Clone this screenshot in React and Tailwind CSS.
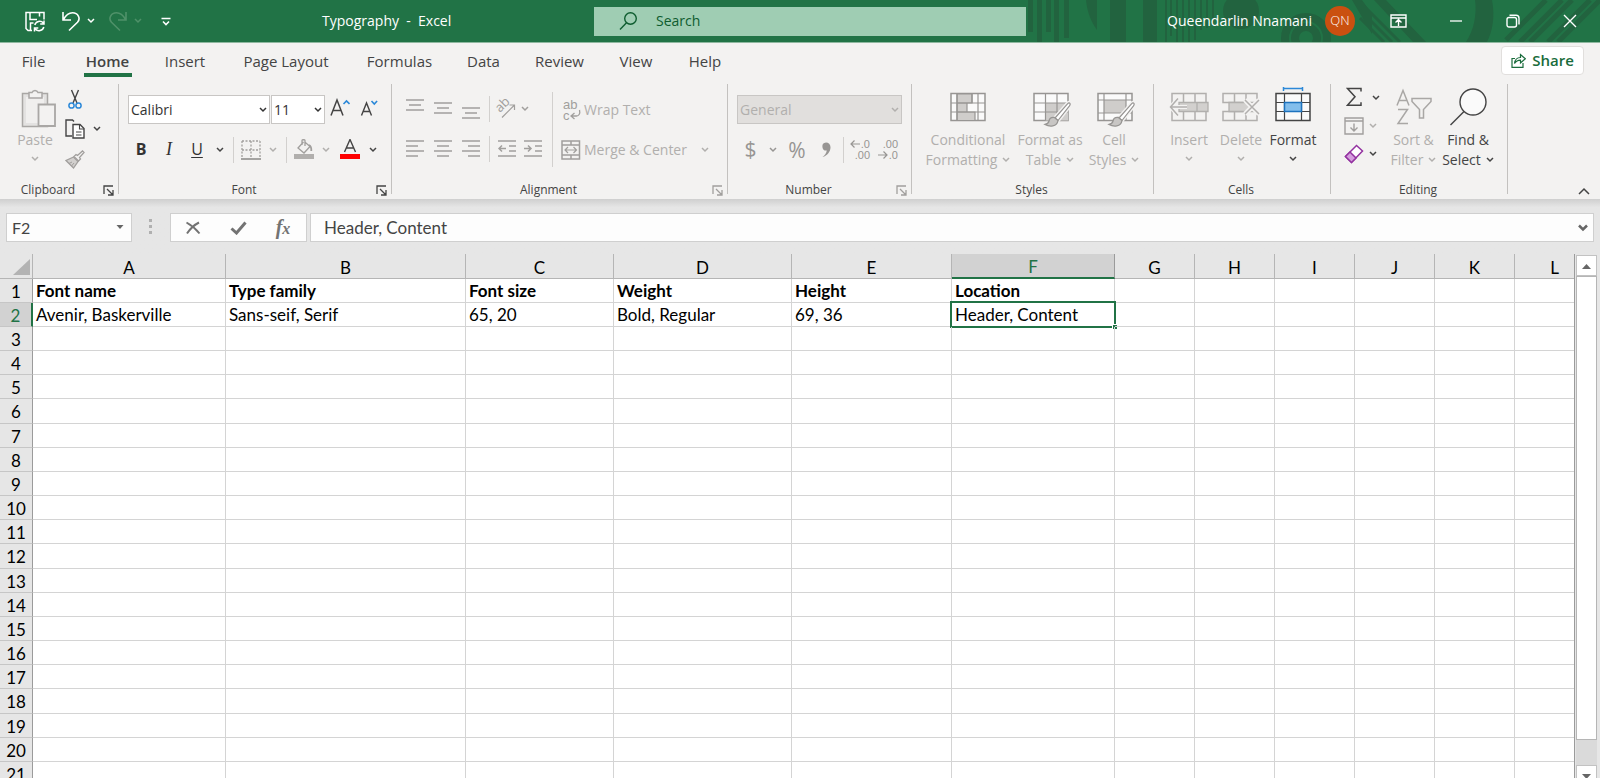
import { useState } from 'react';

const TABS = [
  { name: 'File', width: 'w-[67px]' },
  { name: 'Home', width: 'w-[81px]' },
  { name: 'Insert', width: 'w-[74px]' },
  { name: 'Page Layout', width: 'w-[128px]' },
  { name: 'Formulas', width: 'w-[99px]' },
  { name: 'Data', width: 'w-[69px]' },
  { name: 'Review', width: 'w-[83px]' },
  { name: 'View', width: 'w-[70px]' },
  { name: 'Help', width: 'w-[68px]' },
];

const COLUMNS = [
  { name: 'A', width: 'w-[193px]' },
  { name: 'B', width: 'w-[240px]' },
  { name: 'C', width: 'w-[148px]' },
  { name: 'D', width: 'w-[178px]' },
  { name: 'E', width: 'w-[160px]' },
  { name: 'F', width: 'w-[163px]' },
  { name: 'G', width: 'w-[80px]' },
  { name: 'H', width: 'w-[80px]' },
  { name: 'I', width: 'w-[80px]' },
  { name: 'J', width: 'w-[80px]' },
  { name: 'K', width: 'w-[80px]' },
  { name: 'L', width: 'w-[80px]' },
];

const CELLS = {
  A1: 'Font name',
  B1: 'Type family',
  C1: 'Font size',
  D1: 'Weight',
  E1: 'Height',
  F1: 'Location',
  A2: 'Avenir, Baskerville',
  B2: 'Sans-seif, Serif',
  C2: '65, 20',
  D2: 'Bold, Regular',
  E2: '69, 36',
  F2: 'Header, Content',
};

const ROWS = Array.from({ length: 21 }, (_, i) => i + 1);

function Svg({ w, h, className = '', children }) {
  return (
    <svg
      width={w}
      height={h}
      viewBox={`0 0 ${w} ${h}`}
      fill="none"
      stroke="currentColor"
      className={`shrink-0 ${className}`}
      aria-hidden="true"
    >
      {children}
    </svg>
  );
}

function Chevron({ className = '' }) {
  return (
    <Svg w={8} h={6} className={className}>
      <path d="M1 1l3 3 3-3" strokeWidth="1.5" />
    </Svg>
  );
}

function ChevronButton({ label, width = 'w-[18px]', className = 'text-[#444]' }) {
  return (
    <button aria-label={label} className={`flex h-[26px] shrink-0 items-center justify-center ${width} ${className}`}>
      <Chevron />
    </button>
  );
}

function IconButton({ label, width = 'w-7', className = 'text-[#444]', children }) {
  return (
    <button aria-label={label} className={`flex h-[26px] shrink-0 items-center justify-center ${width} ${className}`}>
      {children}
    </button>
  );
}

function Divider({ className = 'mx-1 h-[26px]' }) {
  return <span className={`w-px shrink-0 bg-[#d2d0ce] ${className}`} />;
}

/* ---------- title bar ---------- */

function TitlePattern() {
  return (
    <svg
      width="580"
      height="42"
      viewBox="1020 0 580 42"
      fill="#22633f"
      className="pointer-events-none absolute top-0 right-0"
      aria-hidden="true"
    >
      <path d="M1028 0h5v32h-5zM1037 0h5v42h-5zM1046 0h5v32h-5zM1054 0h5v42h-5zM1064 0h5v38h-5z" />
      <path d="M1086 0h11v30c-6-8-10-19-11-30z" />
      <path d="M1110 0h16v42h-16zM1143 0h14v42h-14z" />
      <path d="M1165 0h2v42h-2zM1170 0h2v36h-2zM1176 0h2v42h-2zM1182 0h2v42h-2zM1188 0h2v42h-2zM1194 0h2v40h-2zM1200 0h2v30h-2zM1206 0h2v28h-2zM1212 0h2v26h-2z" />
      <circle cx="1241" cy="11" r="18" />
      <circle cx="1306" cy="38" r="21" fill="none" stroke="#22633f" strokeWidth="8" />
      <circle cx="1306" cy="38" r="11" fill="none" stroke="#22633f" strokeWidth="8" />
      <path d="M1352 0h10l10 14v20zM1374 0h12l40 42h-13z" />
      <path d="M1360 10l32 32M1360 18l24 24M1360 2l40 40" stroke="#22633f" strokeWidth="3" />
      <path d="M1475 0h17c3 16 1 30-5 42h-21c8-12 11-28 9-42z" />
      <path d="M1506 40l40-40M1520 42l42-42M1530 42l42-42M1548 42l42-42M1558 42l42-42" stroke="#22633f" strokeWidth="5" />
    </svg>
  );
}

function TitleBar() {
  return (
    <header className="relative flex h-[43px] shrink-0 items-center border-b border-[#8fb8a0] bg-[#217346] text-white">
      <TitlePattern />
      <div className="relative flex w-[594px] shrink-0 items-center pl-[25px]">
        <button aria-label="Save">
          <Svg w={20} h={21}>
            <path d="M7 19.500H3L1 17.500V1.500h18v7M5 1.500v7h7M14.500 1.500v4M5.500 19v-7h3" strokeWidth="1.500" />
            <path d="M9.800 14a5 5 0 0 1 8.600-2M19 9.500v3.500h-3.800M18.800 16a5 5 0 0 1-8.600 2M9.500 20.500V17h3.800" strokeWidth="1.500" />
          </Svg>
        </button>
        <button aria-label="Undo" className="ml-4">
          <Svg w={20} h={22}>
            <path d="M2 2v8h8M2.500 9.500C5 5 8 2.800 11.500 2.800c5.500 0 8.500 5.500 5 9.500L8 20.500" strokeWidth="1.600" />
          </Svg>
        </button>
        <button aria-label="Undo history" className="ml-[6px]">
          <Chevron />
        </button>
        <button aria-label="Redo" className="ml-[13px] text-[#4f9169]">
          <Svg w={20} h={22}>
            <path d="M18 2v8h-8M17.500 9.500C15 5 12 2.800 8.500 2.800c-5.500 0-8.500 5.500-5 9.500l8.500 8.200" strokeWidth="1.600" />
          </Svg>
        </button>
        <button aria-label="Redo history" className="ml-[6px] text-[#4f9169]">
          <Chevron />
        </button>
        <button aria-label="Customize Quick Access Toolbar" className="ml-[19px]">
          <Svg w={10} h={9}>
            <path d="M0.500 1.500h9M2 4.500l3 3 3-3" strokeWidth="1.600" />
          </Svg>
        </button>
        <h1 className="ml-[151px] text-sm whitespace-pre">Typography  -  Excel</h1>
      </div>
      <label className="relative flex h-[29px] min-w-0 flex-1 items-center bg-[#9fcdb3] pl-[25px] text-[#0e5c2f]">
        <Svg w={19} h={20}>
          <circle cx="11.500" cy="7.500" r="5.800" strokeWidth="1.400" />
          <path d="M7.500 11.800L1 18.500" strokeWidth="1.400" />
        </Svg>
        <input
          type="search"
          aria-label="Search"
          placeholder="Search"
          className="ml-[18px] min-w-0 flex-1 bg-transparent text-sm outline-none placeholder:text-[#0e5c2f]"
        />
      </label>
      <div className="relative flex w-[574px] shrink-0 items-center justify-end pr-[2px]">
        <span className="mr-[13px] text-sm">Queendarlin Nnamani</span>
        <button className="mr-[15px] flex size-[30px] items-center justify-center rounded-full bg-[#ca5010] text-[13px] font-light">
          QN
        </button>
        <button aria-label="Ribbon Display Options" className="flex w-[57px] justify-center">
          <Svg w={17} h={14}>
            <path d="M1 1h15v12H1zM1 4h15M8.500 12V6M5.500 8.500l3-3 3 3" strokeWidth="1.400" />
          </Svg>
        </button>
        <button aria-label="Minimize" className="flex w-[57px] justify-center">
          <Svg w={14} h={14}>
            <path d="M1 7h12" strokeWidth="1.300" />
          </Svg>
        </button>
        <button aria-label="Restore Down" className="flex w-[57px] justify-center">
          <Svg w={14} h={14}>
            <rect x="1" y="3.500" width="9.500" height="9.500" rx="2" strokeWidth="1.400" />
            <path d="M3.500 1.200H10a3 3 0 0 1 3 3V10.500" strokeWidth="1.400" />
          </Svg>
        </button>
        <button aria-label="Close" className="flex w-[57px] justify-center">
          <Svg w={14} h={14}>
            <path d="M1 1l12 12M13 1L1 13" strokeWidth="1.400" />
          </Svg>
        </button>
      </div>
    </header>
  );
}

function TabStrip({ active, onSelect }) {
  return (
    <nav className="flex h-[37px] shrink-0 items-start pr-4 text-[15px] text-[#444]">
      {TABS.map((tab) => (
        <button
          key={tab.name}
          onClick={() => onSelect(tab.name)}
          className={`flex h-[34px] shrink-0 flex-col items-center ${tab.width}`}
        >
          <span className={`h-[30px] leading-9 ${active === tab.name ? 'font-semibold' : ''}`}>{tab.name}</span>
          {active === tab.name && <span className="h-1 w-12 bg-[#217346]" />}
        </button>
      ))}
      <button className="mt-[3px] ml-auto flex h-[29px] w-[83px] items-center justify-center gap-[6px] rounded-sm border border-[#e1dfdd] bg-white font-semibold text-[#1a6c3c]">
        <Svg w={15} h={15}>
          <path d="M4 5.500H1v8.800h11V10M3.500 10.500c.5-4 3-6 6-6V1.500l4.800 4.300L9.500 10V7.200c-2.500 0-4.500 1-6 3.300z" strokeWidth="1.200" />
        </Svg>
        Share
      </button>
    </nav>
  );
}

/* ---------- ribbon ---------- */

function Group({ title, width, launcher, children }) {
  return (
    <section className={`flex h-[115px] shrink-0 ${width}`}>
      <div className="flex min-w-0 flex-1 flex-col">
        <div className="flex h-[98px]">{children}</div>
        <footer className="flex h-4 items-center">
          <h2 className="flex-1 pr-[2px] text-center text-xs leading-4 text-[#444]">{title}</h2>
          {launcher && (
            <button aria-label={`${title} settings`} className={`flex w-5 justify-center ${launcher}`}>
              <Svg w={11} h={11}>
                <path d="M1 9V1h9M4 4l5.500 5.500M10 5v5H5" strokeWidth="1.300" />
              </Svg>
            </button>
          )}
        </footer>
      </div>
      <span className="h-[110px] w-px bg-[#c3c1bf]" />
    </section>
  );
}

function BigButton({ lines, width, icon, disabled, below }) {
  return (
    <button
      className={`flex shrink-0 flex-col items-center pt-[3px] text-sm leading-5 ${width} ${disabled ? 'text-[#b1afad]' : 'text-[#444]'}`}
    >
      <span className="mb-px h-[42px]">{icon}</span>
      <span>{lines[0]}</span>
      {lines[1] && (
        <span className="flex items-center gap-[5px] whitespace-nowrap">
          {lines[1]}
          <Chevron />
        </span>
      )}
      {below && <Chevron className="mt-[6px]" />}
    </button>
  );
}

function PasteIcon() {
  return (
    <Svg w={42} h={42} className="text-[#a9a7a5]">
      <path d="M8.500 6.500h25v33h-25z" fill="#e3e2e1" strokeWidth="1.500" />
      <path d="M12 10h18v26H12z" fill="#f0efee" stroke="none" />
      <path d="M15 5.500h3a3.200 3.200 0 0 1 6 0h4V11H15z" fill="#f3f2f1" strokeWidth="1.500" />
      <path d="M24.500 17.500h16.500v21.500h-16.500z" fill="#f3f2f1" strokeWidth="1.800" />
    </Svg>
  );
}

function ClipboardGroup() {
  return (
    <Group title="Clipboard" width="w-[119px]" launcher="text-[#444]">
      <div className="flex pl-3">
        <BigButton lines={['Paste']} width="w-[46px]" icon={<PasteIcon />} disabled below />
        <div className="flex flex-col pl-[5px]">
          <button aria-label="Cut" className="flex h-[30px] w-6 items-center justify-center text-[#444]">
            <Svg w={14} h={20}>
              <path d="M3.500 1l5.500 13M10.500 1L5 14" strokeWidth="1.400" />
              <circle cx="3.500" cy="16.500" r="2.600" stroke="#2b88d8" strokeWidth="1.500" />
              <circle cx="10.500" cy="16.500" r="2.600" stroke="#2b88d8" strokeWidth="1.500" />
            </Svg>
          </button>
          <div className="flex h-[30px] items-center">
            <IconButton label="Copy" width="w-6">
              <Svg w={20} h={20}>
                <path d="M7 17H1V1h6.500l1.500 1.500" strokeWidth="1.400" />
                <path d="M8 5.500h7l4 4V19H8z" fill="#fff" strokeWidth="1.400" />
                <path d="M14.500 5.500V10H19M11 13h5.500M11 16h5.500" strokeWidth="1.100" />
              </Svg>
            </IconButton>
            <ChevronButton label="Copy options" width="w-5" />
          </div>
          <button aria-label="Format Painter" className="flex h-[30px] w-6 items-center justify-center text-[#a19f9d]">
            <Svg w={20} h={19}>
              <path d="M19 2.500L17.500 1l-5 4.500-1.500-1-2 2 4.500 4.500 2-2-1-1.500z" strokeWidth="1.300" />
              <path d="M8.500 7L1 10.500l7.500 7.500 4.500-6.500z" fill="#d2d0ce" strokeWidth="1.300" />
              <path d="M4 13.500l3-1.500M6.500 16l2.500-3" strokeWidth="1" />
            </Svg>
          </button>
        </div>
      </div>
    </Group>
  );
}

function Combo({ label, value, width, disabled }) {
  return (
    <div className={`relative h-[29px] shrink-0 ${width}`}>
      <select
        aria-label={label}
        disabled={disabled}
        className={`h-full w-full appearance-none border border-[#c8c6c4] px-[2px] text-sm opacity-100 ${
          disabled ? 'bg-[#e1dfdd] text-[#b1afad]' : 'bg-white text-[#333]'
        }`}
      >
        <option>{value}</option>
      </select>
      <Chevron
        className={`pointer-events-none absolute top-3 right-[3px] ${disabled ? 'text-[#b1afad]' : 'text-[#333]'}`}
      />
    </div>
  );
}

function FontGroup() {
  return (
    <Group title="Font" width="w-[273px]" launcher="text-[#444]">
      <div className="flex flex-col pt-[11px] pl-2">
        <div className="flex h-[29px] items-center pl-px">
          <Combo label="Font" value="Calibri" width="w-[142px]" />
          <Combo label="Font size" value="11" width="ml-px w-[54px]" />
          <IconButton label="Increase Font Size" width="w-[30px]">
            <Svg w={20} h={24}>
              <path d="M1 17.500L7 2l6 15.500M3 12.500h8" strokeWidth="1.500" />
              <path d="M13.500 6l3-3 3 3" stroke="#2b88d8" strokeWidth="1.600" />
            </Svg>
          </IconButton>
          <IconButton label="Decrease Font Size" width="w-[27px]">
            <Svg w={18} h={24}>
              <path d="M1.500 17.500L6.500 5l5 12.500M3 13.500h7" strokeWidth="1.400" />
              <path d="M11.500 3l2.800 3 2.800-3" stroke="#2b88d8" strokeWidth="1.600" />
            </Svg>
          </IconButton>
        </div>
        <div className="mt-[13px] flex h-[26px] items-center">
          <button className="w-7 pb-[3px] text-center text-base leading-5 font-bold text-[#333]" aria-label="Bold">
            B
          </button>
          <button
            className="w-7 pb-[3px] text-center font-['Liberation_Serif',serif] text-lg leading-5 text-[#333] italic"
            aria-label="Italic"
          >
            I
          </button>
          <button
            className="w-7 pb-[3px] text-center text-base leading-5 text-[#333] underline underline-offset-2"
            aria-label="Underline"
          >
            U
          </button>
          <ChevronButton label="Underline options" />
          <Divider />
          <IconButton label="Borders" width="w-[26px]" className="text-[#a19f9d]">
            <Svg w={20} h={20}>
              <path d="M1 1h18M1 1v16M19 1v16M10 1v16M1 10h18" strokeWidth="1.300" strokeDasharray="2 1.500" />
              <path d="M0 19h20" stroke="#8a8886" strokeWidth="1.500" />
            </Svg>
          </IconButton>
          <ChevronButton label="Border options" className="text-[#b1afad]" />
          <Divider />
          <IconButton label="Fill Color" width="w-[26px]" className="text-[#a19f9d]">
            <Svg w={20} h={22}>
              <path d="M9.500 3L4 9l6 5 6-6.500-5.500-4.800M8 6V1.500c0-1 3-1 3 0V7" strokeWidth="1.300" />
              <path d="M15 6c2 1 2.500 3 2.300 6" strokeWidth="1.800" />
              <path d="M0 15h20v5H0z" fill="#b1afad" stroke="none" />
            </Svg>
          </IconButton>
          <ChevronButton label="Fill color options" className="text-[#b1afad]" />
          <IconButton label="Font Color" width="w-[29px]">
            <Svg w={20} h={22}>
              <path d="M4.500 13L10 0.500 15.500 13M6.500 9h7" strokeWidth="1.400" />
              <path d="M0 15h20v5H0z" fill="#f00" stroke="none" />
            </Svg>
          </IconButton>
          <ChevronButton label="Font color options" />
        </div>
      </div>
    </Group>
  );
}

function Lines({ d }) {
  return (
    <Svg w={18} h={20}>
      <path d={d} strokeWidth="1.500" />
    </Svg>
  );
}

function AlignmentGroup() {
  const muted = 'text-[#a19f9d]';
  return (
    <Group title="Alignment" width="w-[336px]" launcher="text-[#a19f9d]">
      <div className="flex flex-col pt-[10px] pl-[9px]">
        <div className="flex h-[29px] items-center">
          <IconButton label="Top Align" className={muted}>
            <Lines d="M0 1h18M3 6h12M0 11h18" />
          </IconButton>
          <IconButton label="Middle Align" className={muted}>
            <Lines d="M0 4h18M3 9h12M0 14h18" />
          </IconButton>
          <IconButton label="Bottom Align" className={muted}>
            <Lines d="M0 9h18M3 14h12M0 19h18" />
          </IconButton>
          <Divider />
          <IconButton label="Orientation" width="w-[22px]" className={muted}>
            <svg
              width="22"
              height="22"
              viewBox="0 0 22 22"
              fill="none"
              stroke="currentColor"
              className="overflow-visible"
              aria-hidden="true"
            >
              <text transform="translate(6 15) rotate(-45)" fontSize="13" fill="currentColor" stroke="none">
                ab
              </text>
              <path d="M8 19.500L20 7.500M15.500 7h5v5" strokeWidth="1.200" />
            </svg>
          </IconButton>
          <ChevronButton label="Orientation options" className={muted} />
        </div>
        <div className="mt-[13px] flex h-[26px] items-center">
          <IconButton label="Align Left" className={muted}>
            <Lines d="M0 2h18M0 7h12M0 12h18M0 17h12" />
          </IconButton>
          <IconButton label="Center" className={muted}>
            <Lines d="M0 2h18M3 7h12M0 12h18M3 17h12" />
          </IconButton>
          <IconButton label="Align Right" className={muted}>
            <Lines d="M0 2h18M6 7h12M0 12h18M6 17h12" />
          </IconButton>
          <Divider />
          <IconButton label="Decrease Indent" width="w-[25px]" className={muted}>
            <Lines d="M0 2h18M11 7h7M11 12h7M0 17h18M1 9.500h7M4 6.500l-3 3 3 3" />
          </IconButton>
          <IconButton label="Increase Indent" className={muted}>
            <Lines d="M0 2h18M11 7h7M11 12h7M0 17h18M0 9.500h7M4 6.500l3 3-3 3" />
          </IconButton>
        </div>
      </div>
      <Divider className="mt-2 ml-[5px] h-[75px]" />
      <div className="flex flex-col pt-[11px] pl-2 text-sm text-[#b1afad]">
        <button className="flex h-[29px] items-center">
          <svg
            width="22"
            height="24"
            viewBox="0 0 22 24"
            fill="none"
            stroke="#a19f9d"
            className="overflow-visible font-['Liberation_Sans',sans-serif]"
            aria-hidden="true"
          >
            <text x="2" y="11" fontSize="13" fill="#a19f9d" stroke="none">
              ab
            </text>
            <text x="2" y="22" fontSize="13" fill="#a19f9d" stroke="none">
              c
            </text>
            <path d="M18.500 12c1 4-1 6-3 6h-5M13.500 15l-3.500 3 3.500 3" strokeWidth="1.300" />
          </svg>
          <span className="ml-px">Wrap Text</span>
        </button>
        <div className="mt-[13px] flex h-[26px] items-center">
          <button className="flex items-center">
            <Svg w={20} h={20} className="text-[#a19f9d]">
              <path d="M1 1h17.500v18H1zM1 5h17.500M1 15h17.500M10 1v4M10 15v4" strokeWidth="1.500" />
              <path d="M4 10h11.500M7 7l-3 3 3 3M12.500 7l3 3-3 3" strokeWidth="1.200" />
            </Svg>
            <span className="ml-[3px]">Merge &amp; Center</span>
          </button>
          <ChevronButton label="Merge options" width="ml-[9px] w-[18px]" className="text-[#b1afad]" />
        </div>
      </div>
    </Group>
  );
}

function DecimalIcon({ top, bottom, arrow }) {
  return (
    <svg
      width="20"
      height="24"
      viewBox="0 0 20 24"
      fill="none"
      stroke="currentColor"
      className="overflow-visible font-['Liberation_Sans',sans-serif]"
      aria-hidden="true"
    >
      <text x="20" y="10" fontSize="11" textAnchor="end" fill="currentColor" stroke="none">
        {top}
      </text>
      <text x="20" y="21" fontSize="11" textAnchor="end" fill="currentColor" stroke="none">
        {bottom}
      </text>
      <path d={arrow} strokeWidth="1.200" />
    </svg>
  );
}

function NumberGroup() {
  const muted = 'text-[#979593]';
  return (
    <Group title="Number" width="w-[184px]" launcher="text-[#a19f9d]">
      <div className="flex flex-col pt-[11px] pl-[9px]">
        <Combo label="Number Format" value="General" width="w-[165px]" disabled />
        <div className="mt-[13px] flex h-[26px] items-center">
          <button aria-label="Accounting Number Format" className={`w-[27px] pb-[2px] text-center text-[21px] leading-6 ${muted}`}>
            $
          </button>
          <ChevronButton label="Accounting options" className={muted} />
          <button aria-label="Percent Style" className={`w-[30px] pb-px text-center text-[21px] leading-6 ${muted}`}>
            %
          </button>
          <IconButton label="Comma Style" className={muted}>
            <Svg w={10} h={16}>
              <path d="M5 .5a4 4 0 1 0 .8 8c-.5 3-2 5-4.300 6.500 5-1.500 8-5.500 8-9.800C9.500 2.300 7.500.5 5 .5z" fill="currentColor" stroke="none" />
            </Svg>
          </IconButton>
          <Divider className="mx-[3px] h-[26px]" />
          <IconButton label="Increase Decimal" width="w-[26px]" className={muted}>
            <DecimalIcon top=".0" bottom=".00" arrow="M1 6h9M4.500 2.500L1 6l3.500 3.500" />
          </IconButton>
          <IconButton label="Decrease Decimal" width="w-[30px]" className={muted}>
            <DecimalIcon top=".00" bottom=".0" arrow="M0 17h9M5.500 13.500L9 17l-3.500 3.500" />
          </IconButton>
        </div>
      </div>
    </Group>
  );
}

function Brush() {
  return (
    <>
      <path
        d="M36.500 16c1 .8.7 2-.2 3.200L25 33.500l-3-2.500L34.500 16.800c.8-.9 1.500-1.200 2-.8z"
        fill="#fff"
        stroke="#f3f2f1"
        strokeWidth="4"
      />
      <path d="M36.500 16c1 .8.7 2-.2 3.200L25 33.500l-3-2.500L34.500 16.800c.8-.9 1.500-1.200 2-.8z" fill="#fff" strokeWidth="1.200" />
      <path d="M21.500 30.500c-3-.5-5 1-5.500 3.500-.5 2-2 3-4 3.500 4.500 2.500 12 2.500 13-4z" fill="#c8c6c4" strokeWidth="1.300" />
    </>
  );
}

function StylesGroup() {
  return (
    <Group title="Styles" width="w-[242px]">
      <div className="flex pl-[11px]">
        <BigButton
          lines={['Conditional', 'Formatting']}
          width="w-[90px]"
          disabled
          icon={
            <Svg w={36} h={42} className="text-[#979593]">
              <path d="M1 6.500h34v27H1z" fill="#fafafa" strokeWidth="1.500" />
              <path d="M7 7h15v9H7zM7 16h10v9H7zM7 25h18v8.500H7z" fill="#cfcdcb" strokeWidth="1.200" />
              <path d="M1 16h34M1 25h34M7 6.500v27M28 6.500v27M22 6.500v9.500" strokeWidth="1.200" />
            </Svg>
          }
        />
        <BigButton
          lines={['Format as', 'Table']}
          width="w-[74px]"
          disabled
          icon={
            <Svg w={38} h={42} className="ml-1 text-[#979593]">
              <path d="M1 6.500h34v27H1z" fill="#fafafa" strokeWidth="1.500" />
              <path d="M12.500 16H35v17.500H12.500z" fill="#cfcdcb" stroke="none" />
              <path d="M1 16h34M1 25h34M12.500 6.500v27M24 6.500v27" strokeWidth="1.200" />
              <Brush />
            </Svg>
          }
        />
        <BigButton
          lines={['Cell', 'Styles']}
          width="w-[54px]"
          disabled
          icon={
            <Svg w={38} h={42} className="ml-1 text-[#979593]">
              <path d="M1 6.500h34v27H1z" fill="#fafafa" strokeWidth="1.500" />
              <path d="M7 13h22v13H7z" fill="#cfcdcb" stroke="none" />
              <path d="M1 13h34M1 26h34M7 6.500v27M29 6.500v27" strokeWidth="1.200" />
              <Brush />
            </Svg>
          }
        />
      </div>
    </Group>
  );
}

function CellsGroup() {
  return (
    <Group title="Cells" width="w-[177px]">
      <div className="flex pl-[9px]">
        <BigButton
          lines={['Insert']}
          width="w-[52px]"
          disabled
          below
          icon={
            <Svg w={40} h={42} className="text-[#b1afad]">
              <path d="M3 6.500h34v27H3zM14.500 6.500v27M26 6.500v27" strokeWidth="1.500" />
              <path d="M10 15.500h29v9H10z" fill="#d2d0ce" strokeWidth="1.300" />
              <path d="M28 15.500v9" strokeWidth="1.300" />
              <path d="M18 20H2M9 11.500L1.500 20 9 28.500" stroke="#f3f2f1" strokeWidth="4" />
              <path d="M18 20H2M9 11.500L1.500 20 9 28.500" strokeWidth="1.500" />
            </Svg>
          }
        />
        <BigButton
          lines={['Delete']}
          width="w-[52px]"
          disabled
          below
          icon={
            <Svg w={38} h={42} className="text-[#b1afad]">
              <path d="M1 6.500h34v9H1zM1 24.500h34v9H1zM12.500 6.500v27M24 6.500v27" strokeWidth="1.500" />
              <path d="M7 15.500h17l5 4.500-5 4.500H7z" fill="#d2d0ce" strokeWidth="1.300" />
              <path d="M23 13l14 14M37 13L23 27" stroke="#f3f2f1" strokeWidth="5" />
              <path d="M23 13l14 14M37 13L23 27" strokeWidth="1.500" />
            </Svg>
          }
        />
        <BigButton
          lines={['Format']}
          width="w-[52px]"
          below
          icon={
            <Svg w={36} h={42}>
              <path d="M1 6.500h34v27H1z" fill="#fafafa" strokeWidth="1.500" />
              <path d="M1 15.500h34M1 24.500h34M9.500 6.500v27M26.500 6.500v27" strokeWidth="1.200" />
              <path d="M9.500 15.500h17v9h-17z" fill="#83beec" stroke="#1e73be" strokeWidth="1.500" />
              <path d="M8.500 1.500h19M8.500 0v4M27.500 0v4" stroke="#2b88d8" strokeWidth="1.500" />
            </Svg>
          }
        />
      </div>
    </Group>
  );
}

function EditingGroup() {
  return (
    <Group title="Editing" width="w-[177px]">
      <div className="flex pl-[10px]">
        <div className="flex w-[47px] flex-col">
          <div className="flex h-7 items-center">
            <IconButton label="AutoSum" width="w-[26px]">
              <Svg w={16} h={22}>
                <path d="M15 4.500V1.500H1.500L9 9.800 1.500 18.200H15v-3" strokeWidth="1.500" />
              </Svg>
            </IconButton>
            <ChevronButton label="AutoSum options" />
          </div>
          <div className="flex h-7 items-center">
            <IconButton label="Fill" width="w-[26px]" className="text-[#a19f9d]">
              <Svg w={20} h={18}>
                <path d="M1 1h18v16H1zM1 4h18M10 6.500V14M6.500 10.500L10 14l3.500-3.500" strokeWidth="1.400" />
              </Svg>
            </IconButton>
            <ChevronButton label="Fill options" width="w-3" className="text-[#b1afad]" />
          </div>
          <div className="flex h-7 items-center">
            <IconButton label="Clear" width="w-[26px]">
              <Svg w={20} h={20} className="text-[#9332a0]">
                <path d="M1.500 12.500L12.500 1.500l6 5.500L7.500 18.500z" fill="#fff" strokeWidth="1.500" />
                <path d="M1.500 12.500l4.500-4.500 6 6-4.500 4.500z" fill="#d59ede" strokeWidth="1.500" />
              </Svg>
            </IconButton>
            <ChevronButton label="Clear options" width="w-3" />
          </div>
        </div>
        <BigButton
          lines={['Sort &', 'Filter']}
          width="w-[51px]"
          disabled
          icon={
            <Svg w={36} h={42} className="text-[#a9a7a5]">
              <path d="M1 18.500L7 3.500l6 15M3 13.500h8M2 22.500h9.500L2 36.500h10" strokeWidth="1.500" />
              <path d="M16 11.500h19v3l-7.500 8V31h-4v-8.500l-7.500-8z" strokeWidth="1.500" />
            </Svg>
          }
        />
        <BigButton
          lines={['Find &', 'Select']}
          width="w-[58px]"
          icon={
            <Svg w={38} h={42}>
              <circle cx="24" cy="15" r="13" fill="#fafafa" strokeWidth="1.400" />
              <path d="M15 24.500L1.500 38" strokeWidth="1.500" />
            </Svg>
          }
        />
      </div>
    </Group>
  );
}

function Ribbon() {
  return (
    <div className="flex shrink-0 pt-1">
      <ClipboardGroup />
      <FontGroup />
      <AlignmentGroup />
      <NumberGroup />
      <StylesGroup />
      <CellsGroup />
      <EditingGroup />
      <button aria-label="Collapse the Ribbon" className="mr-[10px] mb-1 ml-auto self-end text-[#444]">
        <Svg w={12} h={8}>
          <path d="M1 7l5-5 5 5" strokeWidth="1.500" />
        </Svg>
      </button>
    </div>
  );
}

/* ---------- formula bar ---------- */

function FormulaBar({ value, onChange }) {
  const box = 'flex h-[29px] shrink-0 items-center border border-[#cfcfcf] bg-[#fdfdfd]';
  return (
    <div className="flex h-[55px] shrink-0 items-start bg-linear-to-b from-[#cfcfcf] to-[#e6e6e6] to-15% pt-[14px] pr-[6px] pl-[6px] font-[Lato,sans-serif] text-[#444]">
      <div className={`w-[126px] ${box}`}>
        <input aria-label="Name Box" defaultValue="F2" className="w-[101px] pl-[5px] text-base outline-none" />
        <button aria-label="Name Box options" className="flex flex-1 justify-center text-[#666]">
          <Svg w={8} h={5}>
            <path d="M0.500 0h7L4 4z" fill="currentColor" stroke="none" />
          </Svg>
        </button>
      </div>
      <Svg w={38} h={29}>
        <path d="M17 6h3v3h-3zM17 12h3v3h-3zM17 18h3v3h-3z" fill="#b0b0b0" stroke="none" />
      </Svg>
      <div className={`w-[137px] text-[#737373] ${box}`}>
        <button aria-label="Cancel" className="flex w-[44px] justify-center">
          <Svg w={16} h={14}>
            <path d="M1.500 1.500C6 4 11 8 14.500 12.500M14 1.500C9 4 5 8 2 12.500" strokeWidth="2" />
          </Svg>
        </button>
        <button aria-label="Enter" className="flex w-[46px] justify-center">
          <Svg w={17} h={14}>
            <path d="M1.500 7.500l5 4.500L15.500 1.500" strokeWidth="3" />
          </Svg>
        </button>
        <button
          aria-label="Insert Function"
          className="w-[44px] text-center font-['Liberation_Serif',serif] text-xl leading-6 font-bold italic"
        >
          f<span className="text-base">x</span>
        </button>
      </div>
      <div className={`ml-[3px] min-w-0 flex-1 ${box}`}>
        <input
          aria-label="Formula Bar"
          value={value}
          onChange={(e) => onChange(e.target.value)}
          className="min-w-0 flex-1 pl-[13px] text-[17px] outline-none"
        />
        <button aria-label="Expand Formula Bar" className="flex w-5 justify-center text-[#666]">
          <Svg w={10} h={8}>
            <path d="M1 1.500l4 4 4-4" strokeWidth="2.500" />
          </Svg>
        </button>
      </div>
    </div>
  );
}

/* ---------- sheet ---------- */

function Sheet({ cells }) {
  return (
    <div className="min-w-0 flex-1 overflow-hidden border-r border-[#9b9b9b] bg-white font-[Lato,sans-serif] text-black">
      <table className="w-[1595px] table-fixed border-separate border-spacing-0">
        <thead>
          <tr className="h-[25px] bg-[#e6e6e6]">
            <th className="w-[33px] border-r border-b border-[#b5b5b5] p-0">
              <Svg w={32} h={22}>
                <path d="M30 4v16H13z" fill="#b3b3b3" stroke="none" />
              </Svg>
            </th>
            {COLUMNS.map((col) => (
              <th
                key={col.name}
                className={`border-r p-0 pt-[3px] text-[17px] leading-5 font-normal ${col.width} ${
                  col.name === 'F'
                    ? 'border-b-2 border-r-[#9b9b9b] border-b-[#217346] bg-[#d2d2d2] text-[#217346]'
                    : 'border-b border-[#b5b5b5]'
                }`}
              >
                {col.name}
              </th>
            ))}
          </tr>
        </thead>
        <tbody>
          {ROWS.map((row) => (
            <tr key={row} className={row % 6 === 0 ? 'h-[25px]' : 'h-6'}>
              <th
                className={`border-r border-b border-b-[#c6c6c6] p-0 pt-[2px] text-center text-[17px] leading-5 font-normal ${
                  row === 2 ? 'border-r-2 border-r-[#217346] bg-[#d2d2d2] text-[#217346]' : 'border-r-[#9b9b9b] bg-[#e6e6e6]'
                }`}
              >
                {row}
              </th>
              {COLUMNS.map((col) => {
                const id = `${col.name}${row}`;
                return (
                  <td
                    key={id}
                    className={`relative border-r border-b border-[#d4d4d4] p-0 pt-px pl-[3px] text-[17px] leading-5 whitespace-nowrap ${
                      row === 1 ? 'font-bold' : ''
                    }`}
                  >
                    {cells[id]}
                    {id === 'F2' && (
                      <>
                        <span className="pointer-events-none absolute -inset-[2px] border-2 border-[#217346]" />
                        <span className="pointer-events-none absolute -right-[3px] -bottom-[3px] size-[5px] border-t border-l border-white bg-[#217346]" />
                      </>
                    )}
                  </td>
                );
              })}
            </tr>
          ))}
        </tbody>
      </table>
    </div>
  );
}

function ScrollBar() {
  return (
    <div className="flex w-[25px] shrink-0 flex-col bg-[#e6e6e6] pt-px pr-[3px] pl-px text-[#666]">
      <button aria-label="Scroll up" className="flex h-[21px] items-center justify-center border border-[#c2c2c2] bg-white">
        <Svg w={9} h={6}>
          <path d="M0 6l4.500-5L9 6z" fill="currentColor" stroke="none" />
        </Svg>
      </button>
      <div className="flex flex-1 flex-col bg-[#dadada] pb-[25px]">
        <span className="flex-1 border border-[#b5b5b5] bg-white" />
      </div>
      <button aria-label="Scroll down" className="flex h-[13px] justify-center border border-b-0 border-[#c2c2c2] bg-white pt-2">
        <Svg w={9} h={5}>
          <path d="M0 0h9L4.500 5z" fill="currentColor" stroke="none" />
        </Svg>
      </button>
    </div>
  );
}

export default function App() {
  const [tab, setTab] = useState('Home');
  const [cells, setCells] = useState(CELLS);

  return (
    <div className="flex h-screen flex-col overflow-hidden bg-[#f3f2f1] font-['Open_Sans','Noto_Sans',sans-serif]">
      <TitleBar />
      <TabStrip active={tab} onSelect={setTab} />
      <Ribbon />
      <FormulaBar value={cells.F2} onChange={(value) => setCells({ ...cells, F2: value })} />
      <main className="flex min-h-0 flex-1 overflow-hidden">
        <Sheet cells={cells} />
        <ScrollBar />
      </main>
    </div>
  );
}
